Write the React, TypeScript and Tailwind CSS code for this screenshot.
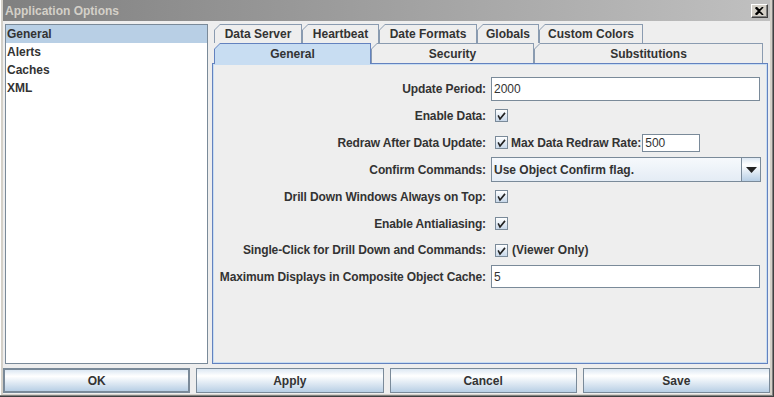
import React from "react";

const F = "[font-family:'Liberation_Sans',Arial,sans-serif]";

function Check() {
  return (
    <div className="w-[13px] h-[13px] border border-[#7a8a99] bg-[linear-gradient(to_bottom,#ffffff,#c8d8ea)] flex items-center justify-center shrink-0">
      <svg width="11" height="11" viewBox="0 0 11 11">
        <polyline points="2.5,6 4,9 8.5,3.5" fill="none" stroke="#222" strokeWidth="1.6" strokeLinecap="square" />
      </svg>
    </div>
  );
}

function Tab({ label, cls, selected }: { label: string; cls: string; selected?: boolean }) {
  return (
    <div
      className={
        cls +
        " shrink-0 pt-px px-px [clip-path:polygon(6px_0,100%_0,100%_100%,0_100%,0_6px)] " +
        (selected ? "bg-[#6382bf] relative z-10 -mb-px pb-0" : "bg-[#8a9bb0]")
      }
    >
      <div
        className={
          "h-full flex items-center justify-center [clip-path:polygon(5px_0,100%_0,100%_100%,0_100%,0_5px)] " +
          (selected ? "bg-[#c8ddf2]" : "bg-[#eeeeee]")
        }
      >
        <span className="text-[12px] font-bold text-[#333] leading-none">{label}</span>
      </div>
    </div>
  );
}

function Label({ children }: { children: React.ReactNode }) {
  return (
    <div className="flex items-center justify-end text-[12px] font-bold text-[#333] whitespace-nowrap tracking-[-0.12px]">
      {children}
    </div>
  );
}

function Btn({ label, def }: { label: string; def?: boolean }) {
  return (
    <div
      className={
        "h-[25px] flex items-center justify-center text-[12px] font-bold text-[#333] bg-[linear-gradient(to_bottom,#dde8f3_0%,#ffffff_30%,#b8cfe5_100%)] " +
        (def ? "border-2 border-[#7a8a99]" : "border border-[#7a8a99]")
      }
    >
      {label}
    </div>
  );
}

export default function App() {
  return (
    <div
      className={
        F +
        " w-[774px] h-[397px] bg-[#d4d0c8] pl-[3px] pr-[3px] pb-[2px] border-r border-b border-[#404040] shadow-[inset_-1px_-1px_0_#808080,inset_1px_0_0_#ffffff] flex flex-col"
      }
    >
      {/* title bar */}
      <div className="h-[21px] shrink-0 bg-[linear-gradient(to_right,#808080,#c0c0c0)] flex items-center justify-between pl-[2px] pr-[2px]">
        <span className="text-[12px] font-bold text-[#d4d0c8]">Application Options</span>
        <div className="w-[17px] h-[14px] bg-[#d4d0c8] border-t border-l border-white border-r border-b border-r-[#404040] border-b-[#404040] shadow-[inset_-1px_-1px_0_#808080] flex items-center justify-center">
          <svg width="9" height="8" viewBox="0 0 9 8">
            <path d="M1 0 L4.5 3.5 L8 0 M1 8 L4.5 4.5 L8 8 M0.5 0.5 L7.5 7.5 M7.5 0.5 L0.5 7.5" stroke="#000" strokeWidth="1.6" fill="none" />
          </svg>
        </div>
      </div>

      {/* body */}
      <div className="flex-1 bg-[#eeeeee] flex flex-col pt-[3px]">
        <div className="h-[340px] flex">
          {/* list */}
          <div className="ml-[2px] w-[203px] h-full border border-[#7a8a99] bg-white flex flex-col">
            <div className="h-[18px] bg-[#b8cfe5] flex items-center pl-[1px] text-[12px] font-bold text-[#333]">General</div>
            <div className="h-[18px] flex items-center pl-[1px] text-[12px] font-bold text-[#333]">Alerts</div>
            <div className="h-[18px] flex items-center pl-[1px] text-[12px] font-bold text-[#333]">Caches</div>
            <div className="h-[18px] flex items-center pl-[1px] text-[12px] font-bold text-[#333]">XML</div>
          </div>

          {/* tab pane */}
          <div className="ml-[4px] w-[556px] h-full flex flex-col">
            <div className="h-[19px] flex pl-[2px]">
              <Tab label="Data Server" cls="w-[88px]" />
              <Tab label="Heartbeat" cls="w-[77px]" />
              <Tab label="Date Formats" cls="w-[98px]" />
              <Tab label="Globals" cls="w-[62px]" />
              <Tab label="Custom Colors" cls="w-[104px]" />
            </div>
            <div className="h-[20px] flex pl-[2px]">
              <Tab label="General" cls="w-[157px]" selected />
              <Tab label="Security" cls="w-[163px]" />
              <Tab label="Substitutions" cls="w-[229px]" />
            </div>
            <div className="flex-1 border border-[#6382bf] shadow-[inset_0_0_0_1px_#c8ddf2] bg-[#eeeeee] pt-[12px] pl-[6px]">
              <div className="grid grid-cols-[267px_270px] grid-rows-[26px_27px_27px_27px_27px_27px_26px_27px] gap-x-[5px]">
                <Label>Update Period:</Label>
                <div className="flex items-center">
                  <div className="w-[269px] h-[24px] border border-[#7a8a99] bg-white flex items-center pl-[2px] text-[12px] text-[#333]">2000</div>
                </div>

                <Label>Enable Data:</Label>
                <div className="flex items-center pl-[4px]"><Check /></div>

                <Label>Redraw After Data Update:</Label>
                <div className="flex items-center pl-[4px]">
                  <Check />
                  <span className="ml-[3px] text-[12px] font-bold text-[#333] whitespace-nowrap tracking-[-0.12px]">Max Data Redraw Rate:</span>
                  <div className="ml-px w-[58px] h-[18px] border border-[#7a8a99] bg-white flex items-center pl-[2px] text-[12px] text-[#333]">500</div>
                </div>

                <Label>Confirm Commands:</Label>
                <div className="flex items-center">
                  <div className="w-[270px] h-[25px] border border-[#7a8a99] bg-[linear-gradient(to_bottom,#f6f9fc,#e4ecf5)] flex">
                    <div className="flex-1 flex items-center pl-[2px] text-[12px] font-bold text-[#333]">Use Object Confirm flag.</div>
                    <div className="w-[19px] border-l border-[#7a8a99] bg-[linear-gradient(to_bottom,#dde8f3_0%,#ffffff_30%,#b8cfe5_100%)] flex items-center justify-center">
                      <svg width="11" height="6" viewBox="0 0 11 6"><polygon points="0,0 11,0 5.5,6" fill="#222" /></svg>
                    </div>
                  </div>
                </div>

                <Label>Drill Down Windows Always on Top:</Label>
                <div className="flex items-center pl-[4px]"><Check /></div>

                <Label>Enable Antialiasing:</Label>
                <div className="flex items-center pl-[4px]"><Check /></div>

                <Label>Single-Click for Drill Down and Commands:</Label>
                <div className="flex items-center pl-[4px]">
                  <Check />
                  <span className="ml-[4px] text-[12px] font-bold text-[#333]">(Viewer Only)</span>
                </div>

                <Label>Maximum Displays in Composite Object Cache:</Label>
                <div className="flex items-center">
                  <div className="w-[269px] h-[23px] border border-[#7a8a99] bg-white flex items-center pl-[2px] text-[12px] text-[#333]">5</div>
                </div>
              </div>
            </div>
          </div>
        </div>

        {/* buttons */}
        <div className="mt-[4px] grid grid-cols-4 gap-x-[6px]">
          <Btn label="OK" def />
          <Btn label="Apply" />
          <Btn label="Cancel" />
          <Btn label="Save" />
        </div>
      </div>
    </div>
  );
}
